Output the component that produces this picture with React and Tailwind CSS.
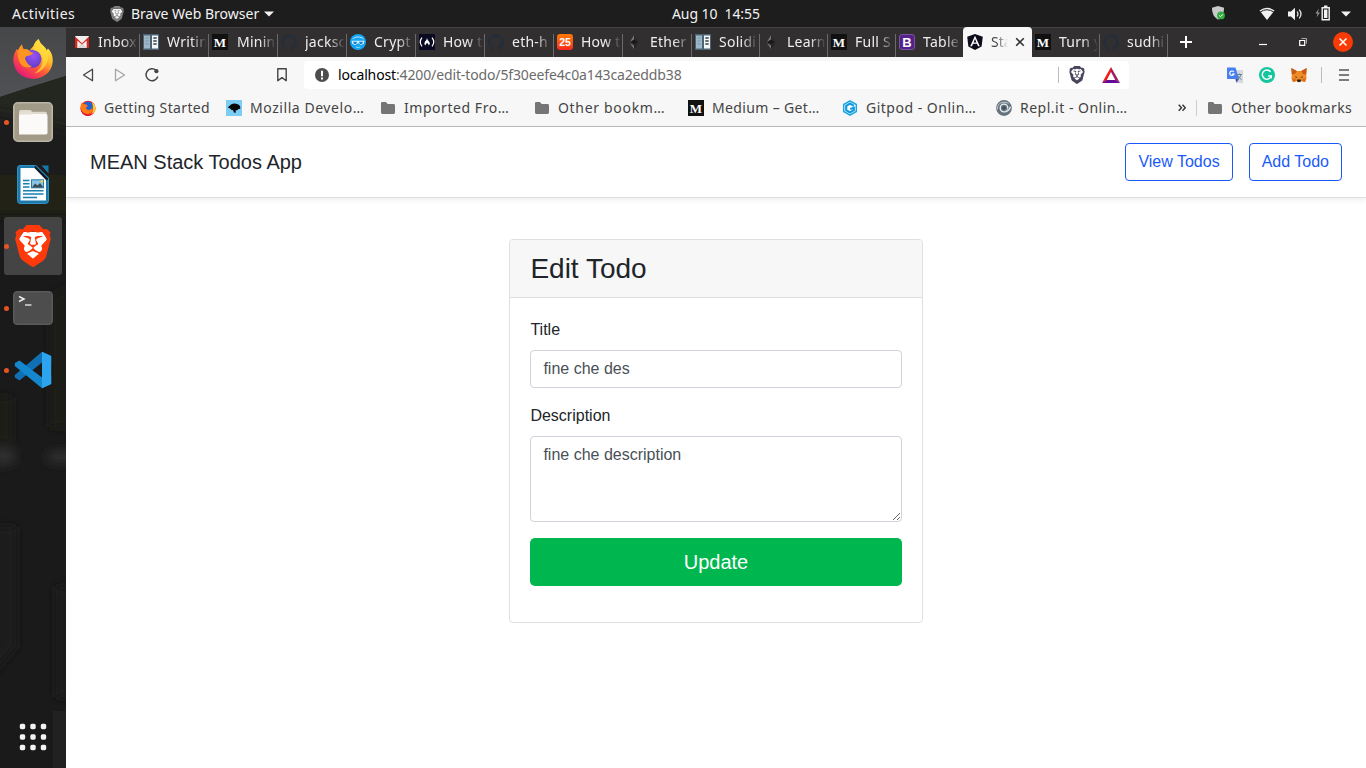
import React from "react";
import { SiBrave, SiGithub } from "react-icons/si";

const UI = "font-['Noto_Sans',sans-serif]";

/* ---------- favicons ---------- */

function Gmail() {
  return (
    <svg width="14" height="12" viewBox="0 0 14 12">
      <rect width="14" height="12" rx="0.6" fill="#f2efef" />
      <path d="M2.2 12 7 7l4.8 5z" fill="#dcd8d8" />
      <path d="M0 .6 7 7.2 14 .6V12h-2.3V4.4L7 8.6 2.3 4.4V12H0z" fill="#d9251d" />
    </svg>
  );
}

function Doc() {
  return (
    <svg width="16" height="16" viewBox="0 0 16 16">
      <rect width="16" height="16" fill="#4a6274" />
      <rect x="1" y="1.5" width="6" height="13" fill="#9db7c8" />
      <rect x="9" y="1.5" width="6" height="13" fill="#f4f7f8" />
      <path d="M2.5 4h3M2.5 7h3M2.5 10h3" stroke="#7592a5" strokeWidth="1" />
      <path d="M10.3 4h3.4M10.3 7h3.4M10.3 10h3.4" stroke="#33434e" strokeWidth="1.4" />
    </svg>
  );
}

function Medium() {
  return (
    <span className="flex h-4 w-4 items-center justify-center bg-[#111] font-['Liberation_Serif',serif] text-[13px] leading-none font-bold text-white">
      M
    </span>
  );
}

function Github() {
  return <SiGithub size={16} color="#252e38" />;
}

function Crypt() {
  return (
    <svg width="16" height="16" viewBox="0 0 16 16">
      <circle cx="8" cy="8" r="8" fill="#12a5f4" />
      <path d="M2.6 5.2C4.5 2.4 11 2.1 13.4 5" stroke="#c9ecff" strokeWidth="1" fill="none" />
      <path d="M1.6 6.8h12.8l-.6 3-2.6 1.2-2.4-1.6H7.3L5 11 2.2 9.8z" fill="#d8f1ff" />
      <path d="M3 7.7h4.2L6 10H4zM8.8 7.7H13l-.8 2.300H10z" fill="#1682ca" />
      <path d="M5.6 13q2.4 1.2 4.8 0" stroke="#a9e0ff" strokeWidth=".8" fill="none" />
    </svg>
  );
}

function CodeCamp() {
  return (
    <svg width="16" height="16" viewBox="0 0 16 16">
      <rect width="16" height="16" fill="#0a0a23" />
      <path d="M3 3.6Q-.5 8 3 12.4M13 3.6q3.5 4.4 0 8.8" stroke="#fff" strokeWidth="1.2" fill="none" />
      <path d="M8 4q.4 2 1.8 3.2Q12 9.6 9.6 11.6q.2-1.7-1.5-2.6-1.6.9-1.6 2.6-2-1.8-.5-4Q7.8 6 8 4z" fill="#fff" />
    </svg>
  );
}

function TwentyFive() {
  return (
    <span className="flex h-4 w-4 items-center justify-center rounded-[3px] bg-linear-to-b from-[#ff7800] to-[#f6221d] font-['Liberation_Sans',sans-serif] text-[10.5px] leading-none font-bold text-white">
      25
    </span>
  );
}

function Ether() {
  return (
    <svg width="16" height="16" viewBox="0 0 16 16">
      <path d="m8 1-4 7 4 2z" fill="#777" />
      <path d="m8 5.6-4 2.4 4 2.3 4.2-2.3z" fill="#181818" />
      <path d="m8 1 4.2 7L8 5.8z" fill="#292929" />
      <path d="M4 9.2 8 15v-3.4z" fill="#777" />
      <path d="M8 15v-3.4l4.2-2.4z" fill="#202020" />
    </svg>
  );
}

function Bootstrap() {
  return (
    <span className="flex h-4 w-4 items-center justify-center rounded-[3px] border border-[#77539d] bg-[#55208a] font-['Liberation_Sans',sans-serif] text-[13px] leading-none font-bold text-white">
      B
    </span>
  );
}

function Angular() {
  return (
    <svg width="16" height="16" viewBox="0 0 16 16">
      <path d="M8 0 15.8 2.7 14.6 12.6 8 16 1.4 12.6.2 2.7z" fill="#0b0b1a" />
      <path fillRule="evenodd" d="M8 1.8 3.2 12.2H5l1-2.4h4l1 2.4h1.8zM8 5.1l1.4 3.3H6.6z" fill="#fff" />
    </svg>
  );
}

/* Lion shield: the glyph's cut-outs show the white face behind it. */
function BraveMark({ size, color, face = "#fff" }) {
  return (
    <svg width={size} height={size} viewBox="0 0 24 24" className="shrink-0">
      <path d="M6.500 4h11l2.500 4-2.500 9.500L12 21.500 6.500 17.500 4 8z" fill={face} />
      <SiBrave width="24" height="24" size={24} color={color} />
    </svg>
  );
}

/* ---------- browser tabs ---------- */

const TABS = [
  { w: "w-[74px] pl-[9px]", gap: "ml-[9px]", icon: Gmail, title: "Inbox" },
  { w: "w-[69px] pl-[3px]", gap: "ml-[8px]", icon: Doc, title: "Writin" },
  { w: "w-[69px] pl-[3px]", gap: "ml-[9px]", icon: Medium, title: "Minin" },
  { w: "w-[69px] pl-[3px]", gap: "ml-[8px]", icon: Github, title: "jacksc" },
  { w: "w-[69px] pl-[3px]", gap: "ml-[8px]", icon: Crypt, title: "Crypt" },
  { w: "w-[69px] pl-[3px]", gap: "ml-[8px]", icon: CodeCamp, title: "How t" },
  { w: "w-[69px] pl-[3px]", gap: "ml-[8px]", icon: Github, title: "eth-h" },
  { w: "w-[69px] pl-[3px]", gap: "ml-[8px]", icon: TwentyFive, title: "How t" },
  { w: "w-[69px] pl-[3px]", gap: "ml-[8px]", icon: Ether, title: "Ether" },
  { w: "w-[68px] pl-[3px]", gap: "ml-[8px]", icon: Doc, title: "Solidi" },
  { w: "w-[68px] pl-[3px]", gap: "ml-[8px]", icon: Ether, title: "Learn" },
  { w: "w-[68px] pl-[3px]", gap: "ml-[8px]", icon: Medium, title: "Full S" },
  { w: "w-[67px] pl-[3px]", gap: "ml-[8px]", icon: Bootstrap, title: "Table", last: true },
  { active: true, w: "w-[69px] pl-[4px]", gap: "ml-[8px]", icon: Angular, title: "Sta" },
  { w: "w-[68px] pl-[3px]", gap: "ml-[8px]", icon: Medium, title: "Turn y" },
  { w: "w-[68px] pl-[3px]", gap: "ml-[8px]", icon: Github, title: "sudhi" },
];

function Tab({ tab }) {
  const Icon = tab.icon;
  if (tab.active) {
    return (
      <div className={`flex h-[30px] shrink-0 items-center rounded-t-[4px] bg-[#f7f7f7] pr-[7px] ${tab.w}`}>
        <Icon />
        <span className="ml-[8px] w-[17px] shrink-0 overflow-hidden mask-r-from-30% text-[14px] leading-[20px] whitespace-nowrap text-[#444]">
          {tab.title}
        </span>
        <svg className="ml-auto" width="10" height="10" viewBox="0 0 10 10">
          <path d="m1.2 1.2 7.6 7.6m0-7.6L1.2 8.8" stroke="#333" strokeWidth="1.6" />
        </svg>
      </div>
    );
  }
  return (
    <div className={`flex h-[30px] shrink-0 pr-[4px] ${tab.w}`}>
      <div className="flex min-w-0 flex-1 items-center">
        <span className="flex shrink-0 items-center">
          <Icon />
        </span>
        <span
          className={`-mr-[2px] min-w-0 flex-1 overflow-hidden mask-r-from-60% text-[14px] leading-[20px] tracking-[0.25px] whitespace-nowrap text-[#eee] ${tab.gap}`}
        >
          {tab.title}
        </span>
      </div>
      {!tab.last && <span className="-mr-[4px] ml-[3px] mt-[7px] h-[23px] w-px bg-[#6b696a]" />}
    </div>
  );
}

/* ---------- bookmarks ---------- */

function Folder() {
  return (
    <svg width="16" height="16" viewBox="0 0 16 16">
      <path d="M1.8 2H6l1.6 2h6A1.4 1.4 0 0 1 15 5.4v7.2a1.4 1.4 0 0 1-1.4 1.4H2.400A1.4 1.4 0 0 1 1 12.600V3.200A1.200 1.200 0 0 1 1.800 2z" fill="#757575" />
    </svg>
  );
}

function SmallFirefox() {
  return (
    <svg width="16" height="16" viewBox="0 0 16 16">
      <circle cx="8" cy="8.3" r="7.6" fill="#ee2d27" />
      <circle cx="8" cy="6.6" r="5.2" fill="#1f63d2" />
      <path d="M.6 5.6 1.8 2.2 3.2 4 6.6 4.600 7.800 6 6 7.600q.2 2.600 3.400 2.400 3-.6 2.800-4.200 1.200 5-1.800 7.400-4 1.600-7-.4Q.2 10.600.6 5.600z" fill="#ff7a12" />
      <path d="M11.800 2.600q4.200 2.400 3.800 6.400-1 4.200-5 5.600 4.400-4.600 1.200-12z" fill="#ffc928" />
      <path d="M.6 8q1 5.400 6.400 6.600 4 .4 6.400-2-2.600 3.800-7 3.200Q1 14.400.6 8z" fill="#dd1538" />
    </svg>
  );
}

function Mozilla() {
  return (
    <svg width="16" height="16" viewBox="0 0 16 16">
      <rect width="16" height="16" fill="#7bcdf3" />
      <path d="M1.800 7.500 3.400 6 5 4.600Q8 3 11 4q3 .6 3.400 4-.4 1.200-1.400.8-1 .2-1.400 1.200l-2 .6.2 2.200-2-.4-.6-2.200-2-.4-1-1.400z" fill="#080808" />
    </svg>
  );
}

function Gitpod() {
  return (
    <svg width="16" height="16" viewBox="0 0 16 16">
      <path d="M8 .9 14.3 4.500v7L8 15.100 1.700 11.500v-7z" fill="#fff" stroke="#1ca5e4" strokeWidth="1.5" />
      <path d="M11.800 5.700 8 3.600 4.200 5.800v4.400L8 12.400l3.800-2.200V7.800L8.200 9" fill="none" stroke="#159bdd" strokeWidth="2.2" />
    </svg>
  );
}

function Replit() {
  return (
    <svg width="16" height="16" viewBox="0 0 16 16">
      <circle cx="8" cy="8" r="7.9" fill="#64747e" />
      <path d="M11.800 8A3.800 3.800 0 1 0 8 11.800q5 0 6.400-5" fill="none" stroke="#eef1f2" strokeWidth="1.3" />
      <path d="M1.400 9.500Q1 3.500 7 2.200q3.500-.4 5.500 1.200M8 11.800q3.800 0 3.800-3.800" fill="none" stroke="#cbd3d7" strokeWidth=".9" />
      <circle cx="8" cy="8" r="1.8" fill="#3f4d56" />
    </svg>
  );
}

const BOOKMARKS = [
  { w: "w-[146px]", icon: SmallFirefox, title: "Getting Started", t: "tracking-[0.36px]" },
  { w: "w-[154px]", icon: Mozilla, title: "Mozilla Develo…", t: "tracking-[0.56px]" },
  { w: "w-[154px]", icon: Folder, title: "Imported Fro…", t: "tracking-[0.55px]" },
  { w: "w-[154px]", icon: Folder, title: "Other bookm…", t: "tracking-[0.68px]" },
  { w: "w-[154px]", icon: Medium, title: "Medium – Get…", t: "tracking-[0.35px]" },
  { w: "w-[154px]", icon: Gitpod, title: "Gitpod - Onlin…", t: "tracking-[0.5px]" },
  { w: "w-[154px]", icon: Replit, title: "Repl.it - Onlin…", t: "tracking-[0.5px]" },
];

/* ---------- system bar ---------- */

function TopBar() {
  return (
    <div className={`grid h-[27px] shrink-0 grid-cols-[672px_1fr_auto] items-center bg-[#1d1d1d] text-[14px] leading-[20px] text-[#f2f2f2] ${UI}`}>
      <div className="flex items-center pl-[12px]">
        <span className="w-[97px] tracking-[0.5px] whitespace-nowrap">Activities</span>
        <span className="flex w-[22px]">
          <BraveMark size={16} color="#7d7d7d" face="#f4f4f4" />
        </span>
        <span className="w-[133px] whitespace-nowrap">Brave Web Browser</span>
        <svg width="10" height="6" viewBox="0 0 10 6">
          <path d="M0 .5h10L5 5.500z" fill="#f2f2f2" />
        </svg>
      </div>
      <span className="tracking-[-0.08px] whitespace-pre">Aug 10  14:55</span>
      <div className="flex items-center pr-[15px]">
        <svg className="-mt-[2px] mr-[-1px]" width="14" height="16" viewBox="0 0 14 16">
          <path d="M7 1 13 2.800q.4 7.800-6 12-6.400-4.200-6-12z" fill="#c9c9c9" />
          <circle cx="10" cy="10.400" r="3.900" fill="#2fae42" />
          <path d="m8.200 10.500 1.300 1.300 2.300-2.500" stroke="#fff" strokeWidth="1" fill="none" />
        </svg>
        <svg className="ml-[35px]" width="16" height="14" viewBox="0 0 16 14">
          <path d="M.5 3.500Q8-2 15.500 3.500L8 13z" fill="#f2f2f2" />
          <path d="M1.200 5Q8 .5 14.800 5" fill="none" stroke="#1d1d1d" strokeWidth="1" />
        </svg>
        <svg className="ml-[12px]" width="16" height="14" viewBox="0 0 16 14">
          <path d="M1 4.500h3L8 .8v12.400L4 9.500H1z" fill="#f2f2f2" />
          <path d="M10 4.500q2 2.500 0 5M12.200 2.600q3.600 4.400 0 8.800" fill="none" stroke="#f2f2f2" strokeWidth="1.2" />
        </svg>
        <svg className="-mt-[2px] ml-[12px]" width="16" height="16" viewBox="0 0 16 16">
          <path d="M4 3.500.5 8.500h2.200L1.500 12.500 5 7.500H2.800z" fill="#999" />
          <path d="M7.200 2.700h7v12h-7z" fill="none" stroke="#f2f2f2" strokeWidth="1.4" />
          <path d="M9 4.500h3.400v8.400H9zM9 .5h3.400V2H9z" fill="#f2f2f2" />
        </svg>
        <svg className="ml-[10px]" width="10" height="6" viewBox="0 0 10 6">
          <path d="M0 .5h10L5 5.500z" fill="#f2f2f2" />
        </svg>
      </div>
    </div>
  );
}

/* ---------- dock ---------- */

function DockItem({ running, active, children }) {
  return (
    <div className="flex h-[62px] w-[66px] items-center pl-[4px]">
      <div className={`flex h-[58px] w-[58px] items-center rounded-[3px] ${active ? "bg-[#444444]" : ""}`}>
        <span className={`h-[5px] w-[5px] shrink-0 rounded-full ${running ? "bg-[#e95420]" : ""}`} />
        <span className="flex w-[48px] justify-center">{children}</span>
      </div>
    </div>
  );
}

function FirefoxIcon() {
  return (
    <svg className="-mt-[2px]" width="42" height="42" viewBox="0 0 42 42">
      <defs>
        <linearGradient id="ffBody" x1="0.85" y1="0.1" x2="0.25" y2="0.95">
          <stop offset="0" stopColor="#fff04a" />
          <stop offset="0.35" stopColor="#ffb52a" />
          <stop offset="0.62" stopColor="#ff5a35" />
          <stop offset="1" stopColor="#e61a78" />
        </linearGradient>
        <radialGradient id="ffGlobe" cx="0.55" cy="0.35" r="0.7">
          <stop offset="0" stopColor="#9b52f5" />
          <stop offset="1" stopColor="#5a3bc4" />
        </radialGradient>
      </defs>
      <path d="M26.500 1q1.500 4.500 5 7 2.500 1.500 3 4.500l1.500-2q5 5 4.800 12.500Q39.500 38.500 22 41 3.500 40 1.300 23q-.3-6 2.700-10.500l.2-1.500 1.800 1.500Q7.500 8.500 10 6.500q0 3 1.500 4.500 3.500-.5 6 1.500Q20 9.500 22 7.500 23.500 3 26.500 1z" fill="url(#ffBody)" />
      <circle cx="20.500" cy="20.800" r="9" fill="url(#ffGlobe)" />
      <path d="M5.500 13Q8.500 8 10 6.500q0 3 1.500 4.500 4-.5 7 3l3 1q-2 2.500-6 3-3.500.8-2 4 2.200 5 6.500 6.500-6 2.500-10-1Q5.500 23 5.500 13z" fill="#ff9422" />
      <path d="M26.500 1q1.500 4.500 5 7 6 5.500 4 15-3 10-13 12.500 9-6.500 8-15-1.500-7-9-8.500Q20.500 5 26.500 1z" fill="#ffdb3b" opacity="0.75" />
    </svg>
  );
}

function FilesIcon() {
  return (
    <svg width="40" height="40" viewBox="0 0 40 40">
      <rect x="0.8" y="0.8" width="38.4" height="38.4" rx="4" fill="#a09a86" stroke="#bcb7a5" strokeWidth="1.6" />
      <path d="M6 33V10q0-2 2-2h9q1.500 0 2 1.800H32q2 0 2 2V20z" fill="#dedace" />
      <rect x="6" y="12" width="28.5" height="20.5" rx="1.8" fill="#fbfaf8" />
      <path d="M6 12.500h12.500l2-2.500H8z" fill="#e3dfd4" />
    </svg>
  );
}

function WriterIcon() {
  return (
    <svg width="32" height="39" viewBox="0 0 32 39">
      <path d="M3 .5h16L31.500 13V35.500q0 3-3 3H3q-2.500 0-2.500-3V3Q.5.5 3 .5z" fill="#1c79ac" stroke="#3292c4" />
      <path d="M3.500 3h14.500L29 14.500V35.500H3.500z" fill="#fbfdfe" />
      <path d="m18 .5 13.500 13.500-2 1.500L17.500 3z" fill="#0d1c26" />
      <path d="M24.500.5h7V8.500z" fill="#1877a9" />
      <path d="M6 15.500h6.500M6 18.700h6.500M6 22h6.500M6 25.700h20.500M6 29h20.500M6 32.500h14" stroke="#1b7eae" strokeWidth="1.5" />
      <rect x="14.5" y="14.8" width="12" height="8" fill="#8bc3e4" stroke="#237eac" />
      <path d="m15 22.500 3-4 2.500 2 2.500-2.500 3.500 4.500z" fill="#384b56" />
      <circle cx="25" cy="16.3" r="1.3" fill="#f5d33e" />
    </svg>
  );
}

function TerminalIcon() {
  return (
    <svg width="40" height="34" viewBox="0 0 40 34">
      <rect x="0.75" y="0.75" width="38.5" height="32.5" rx="3.5" fill="#4d4d4d" stroke="#5a5a5a" strokeWidth="1.5" />
      <path d="m6 5.500 5 2.500-5 2.500" fill="none" stroke="#eee" strokeWidth="1.5" />
      <path d="M12 14h6.500" stroke="#eee" strokeWidth="1.3" />
    </svg>
  );
}

function CodeIcon() {
  return (
    <svg width="38" height="38" viewBox="0 0 38 38">
      <path d="M28 .8 37.200 5v8L28 11.500 5.500 29.500.8 26.500V24z" fill="#1070b3" />
      <path d="M28 37.200 37.200 33v-8L28 26.500 5.500 9.500.8 12v3z" fill="#1587cf" />
      <path d="M28 .8 37.200 5v28L28 37.200z" fill="#2ca4ee" />
    </svg>
  );
}

function GridIcon() {
  return (
    <svg className="mt-auto mb-[17px] ml-[19px]" width="28" height="28" viewBox="0 0 28 28" fill="#f3f3f3">
      {[0.8, 11.3, 21.8].map((y) =>
        [0.8, 11.3, 21.8].map((x) => <rect key={`${x}-${y}`} x={x} y={y} width="5.4" height="5.4" rx="1.6" />)
      )}
    </svg>
  );
}

function Wallpaper() {
  return (
    <svg className="absolute inset-0" width="66" height="741" viewBox="0 0 66 741">
      <defs>
        <filter id="soft" filterUnits="userSpaceOnUse" x="-40" y="-40" width="150" height="820">
          <feGaussianBlur stdDeviation="5" />
        </filter>
        <linearGradient id="sky" x1="0" x2="0" y1="0" y2="1">
          <stop offset="0" stopColor="#464749" />
          <stop offset="1" stopColor="#505154" />
        </linearGradient>
      </defs>
      <rect width="66" height="741" fill="#191a19" />
      <path d="M0 0h66v49L0 70z" fill="url(#sky)" />
      <path d="M0 70 30 60 66 49V130H0z" fill="#242620" />
      <g filter="url(#soft)">
        <path d="M-20 82 86 105V150H-20z" fill="#1a1b1b" />
        <path d="M-20 148h106v40H-20z" fill="#212119" />
        <path d="M50 270 86 250V400H50zM-20 370h32v45H-20z" fill="#1d1f18" />
        <path d="M-20 420h34v18h-34zM48 424h36v12H48z" fill="#2d2d2d" />
        <path d="M-20 500h36v120L-20 660z" fill="#1a1c1e" />
        <path d="M56 560h30v110H56z" fill="#1a1b1c" />
      </g>
      <path d="M53 684h13v57H53z" fill="#222122" />
    </svg>
  );
}

function Dock() {
  return (
    <div className="relative w-[66px] shrink-0 overflow-hidden bg-[#191a19]">
      <Wallpaper />
      <div className="relative flex h-full flex-col pt-[2px]">
        <DockItem><FirefoxIcon /></DockItem>
        <DockItem running><FilesIcon /></DockItem>
        <DockItem><WriterIcon /></DockItem>
        <DockItem running active><BraveMark size={42} color="#ff3a0a" /></DockItem>
        <DockItem running><TerminalIcon /></DockItem>
        <DockItem running><CodeIcon /></DockItem>
        <GridIcon />
      </div>
    </div>
  );
}

/* ---------- browser chrome ---------- */

function TabStrip() {
  return (
    <div className="flex h-[30px] items-start bg-linear-to-b from-[#444142] from-[1px] to-[#322f31] to-[1px]">
      {TABS.map((tab, i) => (
        <Tab key={i} tab={tab} />
      ))}
      <svg className="mt-[9px] ml-[12px]" width="12" height="12" viewBox="0 0 12 12">
        <path d="M6 0v12M0 6h12" stroke="#fff" strokeWidth="2" />
      </svg>
      <div className="ml-auto flex h-[30px] items-center pr-[13px]">
        <svg width="8" height="12" viewBox="0 0 8 12">
          <path d="M0 8.500h8" stroke="#fff" strokeWidth="1.2" />
        </svg>
        <svg className="ml-[32px]" width="8" height="8" viewBox="0 0 8 8">
          <path d="M.7 2.500h5v4.800h-5z" fill="none" stroke="#fff" strokeWidth="1.2" />
          <path d="M2.500.5h5v5" fill="none" stroke="#aaa" strokeWidth="1" />
        </svg>
        <span className="ml-[26px] flex h-[20px] w-[20px] items-center justify-center rounded-full bg-[#fb3b05]">
          <svg width="8" height="8" viewBox="0 0 8 8">
            <path d="m.5.5 7 7m0-7-7 7" stroke="#fff" strokeWidth="1.5" />
          </svg>
        </span>
      </div>
    </div>
  );
}

function Toolbar() {
  return (
    <div className="flex h-[36px] items-center bg-[#f7f7f7] pl-[16px]">
      <svg width="12" height="14" viewBox="0 0 12 14">
        <path d="M10.500 1.200v11.600L1.500 7z" fill="none" stroke="#444" strokeWidth="1.3" strokeLinejoin="round" />
      </svg>
      <svg className="ml-[20px]" width="12" height="14" viewBox="0 0 12 14">
        <path d="M1.500 1.200v11.600L10.500 7z" fill="none" stroke="#a5a5a5" strokeWidth="1.3" strokeLinejoin="round" />
      </svg>
      <svg className="ml-[18px]" width="16" height="16" viewBox="0 0 16 16">
        <path d="M12 3.200A6 6 0 1 0 13.800 9.500" fill="none" stroke="#444" strokeWidth="1.5" />
        <circle cx="12.4" cy="4.2" r="2.1" fill="#444" />
      </svg>
      <svg className="ml-[117px]" width="10" height="14" viewBox="0 0 10 14">
        <path d="M.8.8h8.400v12L5 9.600.8 12.800z" fill="none" stroke="#444" strokeWidth="1.4" strokeLinejoin="round" />
      </svg>
      <div className="ml-[17px] flex h-[28px] w-[825px] items-center rounded-[4px] bg-white pl-[11px]">
        <svg width="14" height="14" viewBox="0 0 14 14">
          <circle cx="7" cy="7" r="7" fill="#4d4d4d" />
          <path d="M7 2.800v5.400M7 9.600v2" stroke="#fff" strokeWidth="2" />
        </svg>
        <span className="ml-[9px] text-[14px] leading-[20px] tracking-[-0.13px] whitespace-nowrap text-[#6b6b6b]">
          <span className="text-black">localhost</span>:4200/edit-todo/5f30eefe4c0a143ca2eddb38
        </span>
        <span className="ml-auto h-[16px] w-px bg-[#bbb]" />
        <span className="ml-[9px] flex w-[18px] justify-center">
          <BraveMark size={18} color="#47465c" />
        </span>
        <svg className="mr-[9px] ml-[16px]" width="18" height="16" viewBox="0 0 18 16">
          <path d="M9 0 0 16 4.600 13.300 9 5z" fill="#f01a14" />
          <path d="M9 0 18 16 13.400 13.300 9 5z" fill="#9d1f63" />
          <path d="M0 16h18l-4.600-3H4.600z" fill="#640a94" />
        </svg>
      </div>
      <div className="ml-auto flex items-center pr-[17px]">
        <svg width="16" height="16" viewBox="0 0 16 16">
          <path d="M5 3h11v13H9z" fill="#d7d9dc" />
          <path d="M0 .5h8.500L12 12H.5q-.5 0-.5-.5z" fill="#4a80ee" />
          <path d="M8.500 12H12l-2.500 3.500z" fill="#3949ab" />
          <path d="M6.800 5A2.200 2.200 0 1 0 7 7H5" fill="none" stroke="#fff" strokeWidth="1.2" />
          <path d="M10 7.500h5M12.500 6.500v1M14 7.500q-.8 3.500-3.500 5M11 8.500q1 3 3.500 4" fill="none" stroke="#65869a" strokeWidth="1" />
        </svg>
        <svg className="ml-[16px]" width="16" height="16" viewBox="0 0 16 16">
          <circle cx="8" cy="8" r="8" fill="#13c59d" />
          <path d="M11.600 4.800A4.600 4.600 0 1 0 12.300 9H9.200" fill="none" stroke="#fff" strokeWidth="1.4" />
          <path d="M12.300 8.500v3" stroke="#fff" strokeWidth="1.2" />
        </svg>
        <svg className="ml-[16px]" width="16" height="16" viewBox="0 0 16 16">
          <path d="m.3 1 5.500 3h4.400l5.500-3-.5 6.500.3 4-1.500 3.500-3.500-1-1.500 1.200H7L5.500 14 2 15 .5 11.500l.3-4z" fill="#f08a24" />
          <path d="m.3 1 5.500 3L4 7 .8 7.500zM15.700 1l-5.500 3L12 7l3.200.5z" fill="#c65b18" />
          <path d="m4 9 2.500 1.200L5 10.800zM12 9l-2.500 1.200 1.500.6z" fill="#233447" />
          <path d="M6.300 12.500h3.400v2.300H6.300z" fill="#17191c" />
          <path d="M.8 11.500h4l.7 2.500L2 15zM15.200 11.500h-4l-.7 2.500L14 15z" fill="#dc721e" />
        </svg>
        <span className="ml-[14px] h-[16px] w-px bg-[#bbb]" />
        <svg className="ml-[17px]" width="10" height="12" viewBox="0 0 10 12">
          <path d="M0 1h10M0 6h10M0 11h10" stroke="#555" strokeWidth="1.7" />
        </svg>
      </div>
    </div>
  );
}

function BookmarksBar() {
  return (
    <div className="flex h-[34px] items-center border-b border-[#bcbcbc] bg-[#f7f7f7] pb-[3px] pl-[14px] text-[14px] leading-[20px] text-[#444]">
      {BOOKMARKS.map(({ icon: Icon, ...b }) => (
        <div key={b.title} className={`flex shrink-0 items-center gap-[8px] ${b.w}`}>
          <Icon />
          <span className={`whitespace-nowrap ${b.t}`}>{b.title}</span>
        </div>
      ))}
      <div className="ml-auto flex items-center pr-[13px]">
        <svg width="8" height="8" viewBox="0 0 8 8">
          <path d="m.7.800 2.800 3-2.800 3M4.500.800l2.800 3-2.800 3" fill="none" stroke="#333" strokeWidth="1.4" />
        </svg>
        <span className="ml-[10px] h-[16px] w-px bg-[#ccc]" />
        <span className="ml-[10px] flex"><Folder /></span>
        <span className="ml-[8px] w-[122px] tracking-[0.34px] whitespace-nowrap">Other bookmarks</span>
      </div>
    </div>
  );
}

/* ---------- page ---------- */

function NavButton({ children }) {
  return (
    <button className="h-[38px] rounded-[4px] border border-[#1a5af8] px-[12px] text-[16px] leading-[24px] whitespace-nowrap text-[#1a5af8]">
      {children}
    </button>
  );
}

function TodoPage() {
  return (
    <div className="flex flex-1 flex-col bg-white font-['Liberation_Sans',Arial,sans-serif] text-[#212529]">
      <header className="flex h-[71px] items-center justify-between border-b border-[#dedfe0] px-[24px] shadow-[0_2px_5px_rgba(0,0,0,0.07)]">
        <h1 className="text-[20px] leading-[24px]">MEAN Stack Todos App</h1>
        <nav className="flex gap-[16px]">
          <NavButton>View Todos</NavButton>
          <NavButton>Add Todo</NavButton>
        </nav>
      </header>
      <main className="mx-auto mt-[41px] h-[384px] w-[414px] overflow-hidden rounded-[4px] border border-[#dfdfdf]">
        <div className="flex h-[58px] items-center border-b border-[#dfdfdf] bg-[#f7f7f7] px-[20.4px]">
          <h2 className="text-[28px] leading-[34px]">Edit Todo</h2>
        </div>
        <form className="flex flex-col px-[20px] pt-[20px] text-[16px] leading-[24px]">
          <label htmlFor="title" className="pl-[0.4px]">Title</label>
          <input
            id="title"
            defaultValue="fine che des"
            className="mt-[8px] h-[38px] rounded-[4px] border border-[#ced4da] px-[12.4px] text-[#495057]"
          />
          <label htmlFor="description" className="mt-[16px] pl-[0.4px]">Description</label>
          <textarea
            id="description"
            defaultValue="fine che description"
            className="mt-[8px] h-[86px] rounded-[4px] border border-[#ced4da] px-[12.4px] py-[6px] text-[#495057]"
          />
          <button type="button" className="mt-[16px] h-[48px] rounded-[5px] bg-[#00b74f] text-[20px] leading-[30px] text-white">
            Update
          </button>
        </form>
      </main>
    </div>
  );
}

export default function App() {
  return (
    <div className="flex h-[768px] w-[1366px] flex-col overflow-hidden bg-white">
      <TopBar />
      <div className="flex min-h-0 flex-1">
        <Dock />
        <div className="flex w-[1300px] flex-col">
          <div className={UI}>
            <TabStrip />
            <Toolbar />
            <BookmarksBar />
          </div>
          <TodoPage />
        </div>
      </div>
    </div>
  );
}
